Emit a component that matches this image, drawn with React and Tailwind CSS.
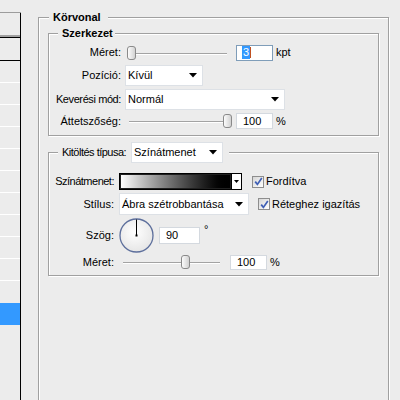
import clsx from 'clsx';

function Thumb() {
  return (
    <svg width="9" height="14" viewBox="0 0 9 14">
      <defs>
        <linearGradient id="thumbFill" x1="0" x2="1" y1="0" y2="0">
          <stop offset="0" stopColor="#ffffff" />
          <stop offset="1" stopColor="#cfcfcf" />
        </linearGradient>
      </defs>
      <rect x="0.5" y="0.5" width="8" height="13" rx="2.5" fill="url(#thumbFill)" stroke="#8a8a8a" />
    </svg>
  );
}

function Slider({ className, thumbLeft, trackLeft = 4 }) {
  return (
    <div className={clsx('relative h-full shrink-0', className)}>
      <div
        className="absolute right-[2px] top-1/2 h-[2px] border-t border-[#a3a3a3] bg-white"
        style={{ left: trackLeft }}
      />
      <div className="absolute top-1/2 -translate-y-1/2 flex" style={{ left: thumbLeft }}>
        <Thumb />
      </div>
    </div>
  );
}

function Arrow() {
  return (
    <svg width="8" height="5" viewBox="0 0 8 5" className="shrink-0">
      <path d="M0 0h8L4 4.5z" fill="#000" />
    </svg>
  );
}

function Select({ className, children }) {
  return (
    <div
      className={clsx(
        'h-full shrink-0 bg-white border border-[#dde1e6] flex items-center justify-between pl-[2px] pr-[5px]',
        className
      )}
    >
      <span className="whitespace-nowrap">{children}</span>
      <Arrow />
    </div>
  );
}

function Field({ className, children }) {
  return (
    <div className={clsx('shrink-0 bg-white border flex items-center', className)}>{children}</div>
  );
}

function Checkbox({ label, className }) {
  return (
    <div className={clsx('flex items-center', className)}>
      <span className="w-[12px] h-[12px] border border-[#8d8d8d] bg-gradient-to-br from-[#d6d6d6] to-white flex items-center justify-center">
        <svg width="9" height="9" viewBox="0 0 9 9">
          <path d="M1.2 4.6L3.4 7.4L7.8 1" stroke="#3f5fb5" strokeWidth="1.7" fill="none" />
        </svg>
      </span>
      <span className="ml-[2px] whitespace-nowrap">{label}</span>
    </div>
  );
}

function Dial() {
  return (
    <svg width="35" height="35" viewBox="0 0 35 35" className="shrink-0">
      <defs>
        <radialGradient id="dialFill" cx="0.45" cy="0.4" r="0.6">
          <stop offset="0" stopColor="#ffffff" />
          <stop offset="1" stopColor="#e6e6e6" />
        </radialGradient>
      </defs>
      <circle cx="17.5" cy="17.5" r="16.5" fill="url(#dialFill)" stroke="#5d6f9c" strokeWidth="1.3" />
      <line x1="17.5" y1="1.5" x2="17.5" y2="17.5" stroke="#000" strokeWidth="1" />
      <rect x="16.5" y="16.5" width="2" height="2" fill="#000" />
    </svg>
  );
}

function LeftList() {
  const rows = Array.from({ length: 10 });
  return (
    <div className="w-[21px] shrink-0 pt-[12px] flex flex-col">
      <div className="h-px bg-[#9c9c9c]" />
      <div className="flex-1 border-r border-black flex flex-col">
        <div className="h-[22px]" />
        <div className="h-[2px] bg-[#a0a0a0]" />
        <div className="h-px bg-black" />
        <div className="h-[22px]" />
        <div className="h-px bg-black" />
        {rows.map((_, i) => (
          <div key={i}>
            <div className="h-[21px]" />
            <div className="h-px bg-white" />
          </div>
        ))}
        <div className="h-[22px]" />
        <div className="h-[22px] bg-[#3399ff]" />
      </div>
    </div>
  );
}

export default function App() {
  return (
    <div className="w-[400px] h-[400px] overflow-hidden flex bg-[#ececec] text-black text-[11px] leading-[13px] font-['Liberation_Sans',Arial,sans-serif]">
      <LeftList />
      <div className="flex-1">
        <div className="mt-[17px] ml-[17px] w-[351px] h-[400px] border border-[#a0a0a0] shadow-[inset_1px_1px_0_#fff,1px_1px_0_#fff]">
          <div className="-mt-[7px] ml-[10px] w-fit pl-[4px] pr-[7px] bg-[#ececec] font-bold">Körvonal</div>

          {/* Szerkezet */}
          <div className="mt-[9px] ml-[9px] w-[331px] pb-[6px] border border-[#a0a0a0] shadow-[inset_1px_1px_0_#fff,1px_1px_0_#fff]">
            <div className="-mt-[7px] ml-[9px] w-fit pl-[4px] pr-[2px] bg-[#ececec] font-bold">Szerkezet</div>

            <div className="flex items-center mt-[4px] h-[17px]">
              <div className="w-[72px] shrink-0 text-right">Méret:</div>
              <Slider className="ml-[4px] w-[104px]" thumbLeft={2} trackLeft={6} />
              <Field className="ml-[7px] w-[37px] h-[16px] border-[#7f9db9] pl-[5px]">
                <span className="bg-[#3399ff] text-white px-px">3</span>
                <span className="w-px h-[11px] bg-[#c05020]" />
              </Field>
              <span className="ml-[3px]">kpt</span>
            </div>

            <div className="flex items-center mt-[4px] h-[21px]">
              <div className="w-[72px] shrink-0 text-right">Pozíció:</div>
              <Select className="ml-[4px] w-[78px]">Kívül</Select>
            </div>

            <div className="flex items-center mt-[3px] h-[21px]">
              <div className="w-[72px] shrink-0 text-right whitespace-nowrap tracking-[-0.4px]">Keverési mód:</div>
              <Select className="ml-[4px] w-[160px]">Normál</Select>
            </div>

            <div className="flex items-center mt-[3px] h-[16px]">
              <div className="w-[72px] shrink-0 text-right">Áttetszőség:</div>
              <Slider className="ml-[4px] w-[104px]" thumbLeft={98} trackLeft={4} />
              <Field className="ml-[7px] w-[37px] h-[16px] border-[#d4d9df] pl-[6px]">100</Field>
              <span className="ml-[3px]">%</span>
            </div>
          </div>

          {/* Kitöltés */}
          <div className="mt-[16px] ml-[9px] w-[331px] pb-[5px] border border-[#a0a0a0] shadow-[inset_1px_1px_0_#fff,1px_1px_0_#fff]">
            <div className="-mt-[11px] ml-[9px] w-fit h-[21px] flex items-center pl-[4px] pr-[6px] bg-[#ececec]">
              <span className="w-[66px] whitespace-nowrap tracking-[-0.5px]">Kitöltés típusa:</span>
              <Select className="ml-[3px] w-[92px]">Színátmenet</Select>
            </div>

            <div className="flex items-center mt-[10px] h-[17px]">
              <div className="w-[65px] shrink-0 text-right whitespace-nowrap tracking-[-0.5px]">Színátmenet:</div>
              <div className="ml-[5px] w-[123px] h-[17px] border border-black flex shrink-0">
                <div className="flex-1 border border-[#202020] bg-gradient-to-r from-white to-black" />
                <div className="w-[10px] border-l border-black bg-white flex items-center justify-center">
                  <svg width="5" height="3" viewBox="0 0 5 3">
                    <path d="M0 0h5L2.5 3z" fill="#000" />
                  </svg>
                </div>
              </div>
              <Checkbox className="ml-[10px]" label="Fordítva" />
            </div>

            <div className="flex items-center mt-[3px] h-[22px]">
              <div className="w-[65px] shrink-0 text-right">Stílus:</div>
              <Select className="ml-[5px] w-[130px]">Ábra szétrobbantása</Select>
              <Checkbox className="ml-[9px]" label="Réteghez igazítás" />
            </div>

            <div className="flex items-center mt-[3px] h-[34px]">
              <div className="w-[65px] shrink-0 text-right">Szög:</div>
              <div className="ml-[5px] flex">
                <Dial />
              </div>
              <Field className="ml-[5px] w-[41px] h-[17px] border-[#d4d9df] pl-[6px]">90</Field>
              <span className="ml-[4px] self-start mt-[5px]">°</span>
            </div>

            <div className="flex items-center mt-[2px] h-[16px]">
              <div className="w-[65px] shrink-0 text-right">Méret:</div>
              <Slider className="ml-[5px] w-[103px]" thumbLeft={62} trackLeft={4} />
              <Field className="ml-[8px] w-[37px] h-[15px] border-[#d4d9df] pl-[6px]">100</Field>
              <span className="ml-[3px]">%</span>
            </div>
          </div>
        </div>
      </div>
    </div>
  );
}
